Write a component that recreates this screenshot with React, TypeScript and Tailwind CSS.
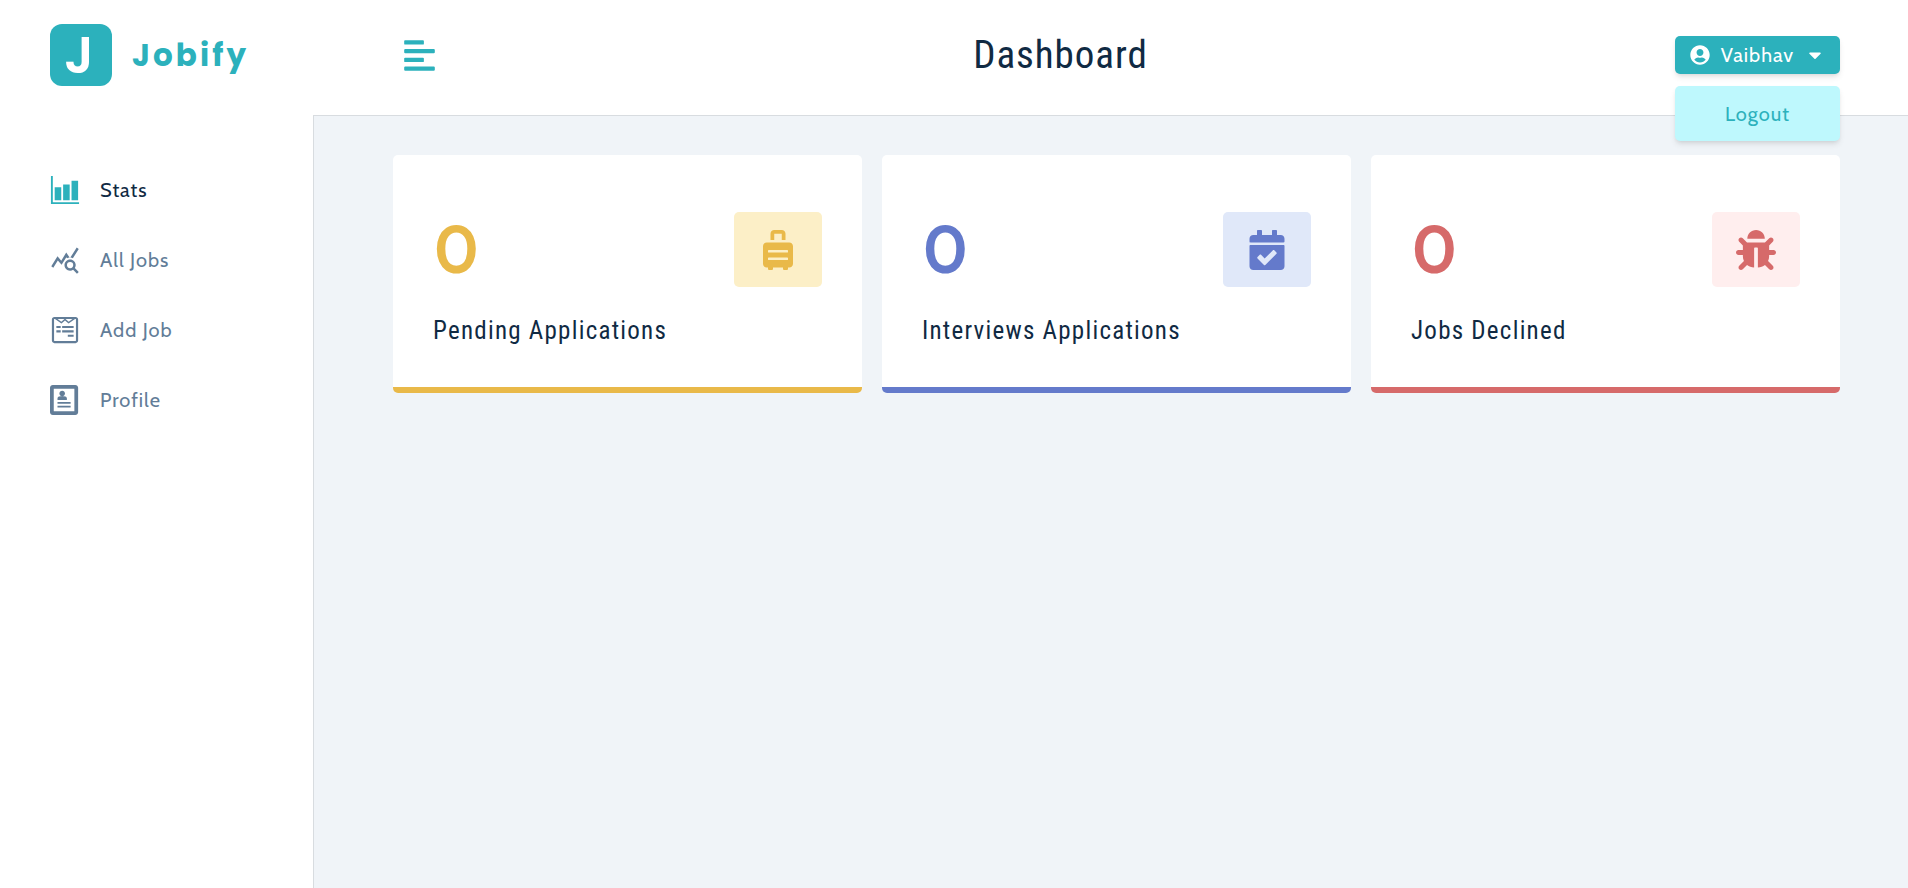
import { useState } from "react";
import type { IconType } from "react-icons";
import {
  FaAlignLeft,
  FaBug,
  FaCalendarCheck,
  FaCaretDown,
  FaSuitcaseRolling,
  FaUserCircle,
  FaWpforms,
} from "react-icons/fa";
import { IoBarChartSharp } from "react-icons/io5";
import { MdQueryStats } from "react-icons/md";
import { ImProfile } from "react-icons/im";

type NavItem = { label: string; icon: IconType; active?: boolean };
type Stat = {
  label: string;
  count: number;
  icon: IconType;
  text: string;
  border: string;
  tile: string;
};

const navItems: NavItem[] = [
  { label: "Stats", icon: IoBarChartSharp, active: true },
  { label: "All Jobs", icon: MdQueryStats },
  { label: "Add Job", icon: FaWpforms },
  { label: "Profile", icon: ImProfile },
];

const stats: Stat[] = [
  {
    label: "Pending Applications",
    count: 0,
    icon: FaSuitcaseRolling,
    text: "text-[#e9b949]",
    border: "border-[#e9b949]",
    tile: "bg-[#fcefc7]",
  },
  {
    label: "Interviews Applications",
    count: 0,
    icon: FaCalendarCheck,
    text: "text-[#647acb]",
    border: "border-[#647acb]",
    tile: "bg-[#e0e8f9]",
  },
  {
    label: "Jobs Declined",
    count: 0,
    icon: FaBug,
    text: "text-[#d66a6a]",
    border: "border-[#d66a6a]",
    tile: "bg-[#ffeeee]",
  },
];

function Logo() {
  return (
    <a href="#home" className="flex h-[110px] items-center gap-5 pl-[50px] font-['Poppins','Inter',sans-serif] text-[#2cb1bc]">
      <span className="flex size-[62px] items-center justify-center rounded-xl bg-[#2cb1bc] pr-1 text-[52px] leading-none font-semibold text-white">
        J
      </span>
      <span className="text-[31px] font-bold tracking-widest">Jobify</span>
    </a>
  );
}

function Sidebar() {
  return (
    <aside className="w-[313px] shrink-0 bg-white">
      <Logo />
      <nav className="mt-[45px] flex flex-col">
        {navItems.map(({ label, icon: Icon, active }) => (
          <a
            key={label}
            href="#section"
            aria-current={active ? "page" : undefined}
            className={
              active
                ? "flex h-[70px] items-center gap-5 pl-[50px] text-xl tracking-wider text-[#102a43]"
                : "flex h-[70px] items-center gap-5 pl-[50px] text-xl tracking-wider text-[#627d98]"
            }
          >
            <Icon className={active ? "size-[30px] text-[#2cb1bc]" : "size-[30px]"} />
            {label}
          </a>
        ))}
      </nav>
    </aside>
  );
}

function UserMenu() {
  const [open, setOpen] = useState(true);
  return (
    <div className="relative">
      <button
        type="button"
        aria-expanded={open}
        onClick={() => setOpen(!open)}
        className="flex h-[38px] w-[165px] items-center justify-between rounded-[5px] bg-[#2cb1bc] px-[15px] text-xl tracking-wider text-white shadow-md"
      >
        <FaUserCircle />
        Vaibhav
        <FaCaretDown />
      </button>
      {open && (
        <div className="absolute top-[50px] right-0 left-0 flex h-[55px] items-center justify-center rounded-[5px] bg-[#bef8fd] shadow-md">
          <button type="button" className="text-xl tracking-wider text-[#2cb1bc]">
            Logout
          </button>
        </div>
      )}
    </div>
  );
}

function StatCard({ label, count, icon: Icon, text, border, tile }: Stat) {
  return (
    <article className={`rounded-[5px] border-b-[6px] bg-white px-10 pt-[57px] pb-10 ${border}`}>
      <header className="flex h-[75px] items-center justify-between">
        <span className={`text-[66px] leading-none font-bold ${text}`}>{count}</span>
        <span className={`flex h-[75px] w-[88px] items-center justify-center rounded-[5px] ${tile}`}>
          <Icon className={`size-10 ${text}`} />
        </span>
      </header>
      <h2 className="mt-7 font-['Roboto_Condensed',Roboto,sans-serif] text-[25px] leading-8 tracking-wider">
        {label}
      </h2>
    </article>
  );
}

export default function App() {
  return (
    <div className="flex min-h-screen bg-white font-['Cabin','Lato',sans-serif] text-[#102a43]">
      <Sidebar />
      <div className="flex min-w-0 flex-1 flex-col">
        <header className="flex h-[115px] items-center justify-between pr-[68px] pb-[5px] pl-20">
          <button type="button" aria-label="Toggle sidebar" className="px-[9px] text-[#2cb1bc]">
            <FaAlignLeft className="size-[35px]" />
          </button>
          <h1 className="font-['Roboto_Condensed',Roboto,sans-serif] text-[39px] tracking-wide">Dashboard</h1>
          <UserMenu />
        </header>
        <main className="flex-1 border-t border-l border-[#d8dce0] bg-[#f0f4f8] pt-[39px] pr-[68px] pb-10 pl-[79px]">
          <section className="grid grid-cols-3 gap-5">
            {stats.map((stat) => (
              <StatCard key={stat.label} {...stat} />
            ))}
          </section>
        </main>
      </div>
    </div>
  );
}
